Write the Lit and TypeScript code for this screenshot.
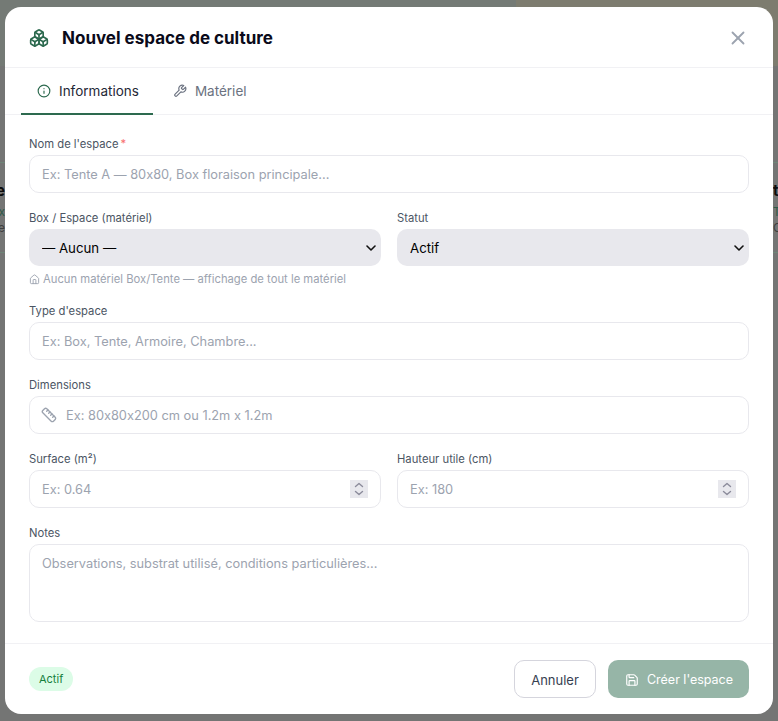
import { LitElement, html, css, svg } from "lit";
import { customElement } from "lit/decorators.js";

const icon = (size: number, body: unknown, width = 2) => html`<svg
  width=${size}
  height=${size}
  viewBox="0 0 24 24"
  fill="none"
  stroke="currentColor"
  stroke-width=${width}
  stroke-linecap="round"
  stroke-linejoin="round"
>${body}</svg>`;

const boxes = svg`<path d="M2.97 12.92A2 2 0 0 0 2 14.63v3.24a2 2 0 0 0 .97 1.71l3 1.8a2 2 0 0 0 2.06 0L12 19v-5.5l-5-3-4.03 2.42Z"/><path d="m7 16.5-4.74-2.85"/><path d="m7 16.5 5-3"/><path d="M7 16.5v5.17"/><path d="M12 13.5V19l3.97 2.38a2 2 0 0 0 2.06 0l3-1.8a2 2 0 0 0 .97-1.71v-3.24a2 2 0 0 0-.97-1.71L17 10.5l-5 3Z"/><path d="m17 16.5-5-3"/><path d="m17 16.5 4.74-2.85"/><path d="M17 16.5v5.17"/><path d="M7.97 4.42A2 2 0 0 0 7 6.13v4.37l5 3 5-3V6.13a2 2 0 0 0-.97-1.71l-3-1.8a2 2 0 0 0-2.06 0l-3 1.8Z"/><path d="M12 8 7.26 5.15"/><path d="m12 8 4.74-2.85"/><path d="M12 13.5V8"/>`;
const info = svg`<circle cx="12" cy="12" r="10"/><path d="M12 16v-4"/><path d="M12 8h.01"/>`;
const wrench = svg`<path d="M14.7 6.3a1 1 0 0 0 0 1.4l1.6 1.6a1 1 0 0 0 1.4 0l3.77-3.77a6 6 0 0 1-7.94 7.94l-6.91 6.91a2.12 2.12 0 0 1-3-3l6.91-6.91a6 6 0 0 1 7.94-7.94l-3.76 3.76z"/>`;
const close = svg`<path d="M18 6 6 18"/><path d="m6 6 12 12"/>`;
const house = svg`<path d="M15 21v-8a1 1 0 0 0-1-1h-4a1 1 0 0 0-1 1v8"/><path d="M3 10a2 2 0 0 1 .709-1.528l7-5.999a2 2 0 0 1 2.582 0l7 5.999A2 2 0 0 1 21 10v9a2 2 0 0 1-2 2H5a2 2 0 0 1-2-2z"/>`;
const ruler = svg`<path d="M21.3 15.3a2.4 2.4 0 0 1 0 3.4l-2.6 2.6a2.4 2.4 0 0 1-3.4 0L2.7 8.7a2.41 2.41 0 0 1 0-3.4l2.6-2.6a2.41 2.41 0 0 1 3.4 0Z"/><path d="m14.5 12.5 2-2"/><path d="m11.5 9.5 2-2"/><path d="m8.5 6.5 2-2"/><path d="m17.5 15.5 2-2"/>`;
const save = svg`<path d="M15.2 3a2 2 0 0 1 1.4.6l3.8 3.8a2 2 0 0 1 .6 1.4V19a2 2 0 0 1-2 2H5a2 2 0 0 1-2-2V5a2 2 0 0 1 2-2z"/><path d="M17 21v-7a1 1 0 0 0-1-1H8a1 1 0 0 0-1 1v7"/><path d="M7 3v4a1 1 0 0 0 1 1h7"/>`;

const spinner = html`<span class="spin">
  <svg width="18" height="18" viewBox="0 0 18 18" fill="none" stroke="#8b8b9b" stroke-width="1.4" stroke-linecap="round" stroke-linejoin="round">
    <path d="M5.5 6.5 9 3.5l3.5 3"/>
    <path d="M5.5 11.5 9 14.5l3.5-3"/>
  </svg>
</span>`;

const chevron = html`<svg class="chev" width="10" height="6" viewBox="0 0 10 6" fill="none" stroke="#111" stroke-width="1.6" stroke-linecap="round" stroke-linejoin="round">
  <path d="M1 1l4 4 4-4"/>
</svg>`;

@customElement("app-root")
export class AppRoot extends LitElement {
  static styles = css`
    :host {
      display: block;
      font-family: Inter, "Liberation Sans", sans-serif;
      font-feature-settings: "calt" 0;
      color: #0f172a;
    }
    * {
      box-sizing: border-box;
    }

    .overlay {
      position: fixed;
      inset: 0;
      background: #747574;
      padding: 7px 5px;
      overflow: hidden;
    }
    .tint {
      position: absolute;
      top: 0;
      height: 66px;
    }
    .tint.a {
      left: 0;
      width: 516px;
      background: #747a75;
    }
    .tint.b {
      left: 516px;
      right: 0;
      background: #7d7c6f;
    }
    .line {
      position: absolute;
      left: 0;
      right: 0;
      height: 1px;
      background: #6f8578;
    }
    .behind {
      position: absolute;
      top: 183px;
      font-size: 12px;
      line-height: 16px;
      white-space: nowrap;
      color: #3f3f3f;
    }
    .behind.left {
      right: 773px;
      text-align: right;
    }
    .behind.right {
      left: 773px;
    }
    .behind b {
      display: block;
      margin-bottom: 5px;
      font-size: 15px;
      color: #0c0c0c;
    }
    .behind i {
      display: block;
      font-style: normal;
      color: #2f5a48;
    }

    .modal {
      position: relative;
      height: 707px;
      background: #fff;
      border-radius: 16px;
      display: flex;
      flex-direction: column;
      overflow: hidden;
    }

    .head {
      flex: none;
      height: 61px;
      padding: 1px 24px 0;
      display: flex;
      align-items: center;
      gap: 13px;
      border-bottom: 1px solid #f1f1f4;
    }
    .head .logo {
      display: flex;
      color: #2d6a4f;
    }
    h2 {
      flex: 1;
      margin: 0;
      font-size: 17px;
      line-height: 28px;
      font-weight: 700;
      color: #0a0a1a;
    }
    .close {
      display: flex;
      color: #9ca3af;
    }

    .tabs {
      flex: none;
      height: 47px;
      padding: 0 16px;
      display: flex;
      gap: 4px;
      border-bottom: 1px solid #f1f1f4;
    }
    .tab {
      height: 47px;
      padding: 0 14px 0 16px;
      display: flex;
      align-items: center;
      gap: 8px;
      font-size: 13.5px;
      font-weight: 400;
      color: #6b7280;
      border-bottom: 2px solid transparent;
    }
    .tab.on {
      color: #1f2937;
      border-bottom-color: #2d6a4f;
    }
    .tab.on svg {
      color: #2d6a4f;
    }

    .body {
      flex: 1;
      padding: 22px 24px 0;
      display: flex;
      flex-direction: column;
      gap: 18px;
    }
    .row {
      display: grid;
      grid-template-columns: 1fr 1fr;
      gap: 16px;
    }
    label {
      display: block;
      margin-bottom: 4px;
      font-size: 11.25px;
      line-height: 14px;
      font-weight: 400;
      color: #4b5563;
    }
    label em {
      font-style: normal;
      color: #f87171;
      margin-left: 2px;
    }
    .ctl {
      display: block;
      width: 100%;
      height: 38px;
      padding: 0 12px;
      border: 1px solid #e8e8ed;
      border-radius: 10px;
      background: #fff;
      font: 400 12.8px Inter, "Liberation Sans", sans-serif;
      font-feature-settings: "calt" 0;
      color: #0f172a;
      outline: none;
    }
    .ctl::placeholder {
      color: #9ca3af;
      opacity: 1;
    }
    input[type="number"] {
      appearance: textfield;
    }
    input[type="number"]::-webkit-inner-spin-button {
      appearance: none;
    }
    .sel {
      position: relative;
    }
    select.ctl {
      appearance: none;
      height: 37px;
      padding-left: 13px;
      border: none;
      background: #e8e8ed;
      font-size: 13.25px;
      color: #000;
    }
    .chev {
      position: absolute;
      right: 5px;
      top: 16px;
    }
    textarea.ctl {
      height: 78px;
      padding: 10px 12px;
      resize: none;
      line-height: 18px;
    }
    .with-icon {
      position: relative;
    }
    .with-icon svg {
      position: absolute;
      left: 12px;
      top: 11px;
      color: #9ca3af;
    }
    .with-icon .ctl {
      padding-left: 36px;
    }
    .num {
      position: relative;
    }
    .spin {
      position: absolute;
      right: 13px;
      top: 10px;
      width: 18px;
      height: 18px;
      display: flex;
      background: #e8e8ed;
    }
    .hint {
      margin-top: 6px;
      display: flex;
      align-items: center;
      gap: 3px;
      font-size: 11.25px;
      line-height: 14px;
      color: #9ca3af;
    }

    .foot {
      flex: none;
      height: 71px;
      padding: 0 24px;
      display: flex;
      align-items: center;
      border-top: 1px solid #f1f1f4;
    }
    .badge {
      padding: 0 10px;
      height: 24px;
      display: flex;
      align-items: center;
      border-radius: 999px;
      background: #dcfce7;
      color: #15803d;
      font-size: 11px;
      font-weight: 400;
    }
    .actions {
      margin-left: auto;
      display: flex;
      gap: 12px;
    }
    button {
      height: 38px;
      border-radius: 10px;
      display: flex;
      align-items: center;
      justify-content: center;
      gap: 8px;
      white-space: nowrap;
      font: 400 13px Inter, "Liberation Sans", sans-serif;
      font-feature-settings: "calt" 0;
    }
    .ghost {
      width: 82px;
      padding: 1px 0 0;
      background: #fff;
      border: 1px solid #d5d5dd;
      color: #374151;
    }
    .primary {
      width: 141px;
      padding: 1px 0 0 1px;
      border: none;
      background: #96b5a7;
      color: #fff;
      font-size: 12.5px;
    }
  `;

  render() {
    return html`
      <div class="overlay">
        <div class="tint a"></div>
        <div class="tint b"></div>
        <div class="line" style="top: 162px"></div>
        <div class="line" style="top: 252px"></div>
        <div class="behind left"><b>Tente</b><i>80x</i><span>Active</span></div>
        <div class="behind right"><b>tion</b><i>Tente</i><span>Chambre</span></div>
        <div class="modal">
          <div class="head">
            <span class="logo">${icon(20, boxes)}</span>
            <h2>Nouvel espace de culture</h2>
            <span class="close">${icon(22, close)}</span>
          </div>
          <div class="tabs">
            <div class="tab on">${icon(14, info)}Informations</div>
            <div class="tab">${icon(14, wrench)}Matériel</div>
          </div>
          <div class="body">
            <div>
              <label>Nom de l'espace<em>*</em></label>
              <input class="ctl" placeholder="Ex: Tente A — 80x80, Box floraison principale..." />
            </div>
            <div class="row">
              <div>
                <label>Box / Espace (matériel)</label>
                <div class="sel">
                  <select class="ctl"><option>— Aucun —</option></select>
                  ${chevron}
                </div>
                <div class="hint">${icon(11, house)}Aucun matériel Box/Tente — affichage de tout le matériel</div>
              </div>
              <div>
                <label>Statut</label>
                <div class="sel">
                  <select class="ctl"><option>Actif</option></select>
                  ${chevron}
                </div>
              </div>
            </div>
            <div>
              <label>Type d'espace</label>
              <input class="ctl" placeholder="Ex: Box, Tente, Armoire, Chambre..." />
            </div>
            <div>
              <label>Dimensions</label>
              <div class="with-icon">
                ${icon(16, ruler)}
                <input class="ctl" placeholder="Ex: 80x80x200 cm ou 1.2m x 1.2m" />
              </div>
            </div>
            <div class="row">
              <div>
                <label>Surface (m²)</label>
                <div class="num">
                  <input class="ctl" type="number" placeholder="Ex: 0.64" />
                  ${spinner}
                </div>
              </div>
              <div>
                <label>Hauteur utile (cm)</label>
                <div class="num">
                  <input class="ctl" type="number" placeholder="Ex: 180" />
                  ${spinner}
                </div>
              </div>
            </div>
            <div>
              <label>Notes</label>
              <textarea class="ctl" placeholder="Observations, substrat utilisé, conditions particulières..."></textarea>
            </div>
          </div>
          <div class="foot">
            <span class="badge">Actif</span>
            <div class="actions">
              <button class="ghost">Annuler</button>
              <button class="primary">${icon(14, save)}Créer l'espace</button>
            </div>
          </div>
        </div>
      </div>
    `;
  }
}
